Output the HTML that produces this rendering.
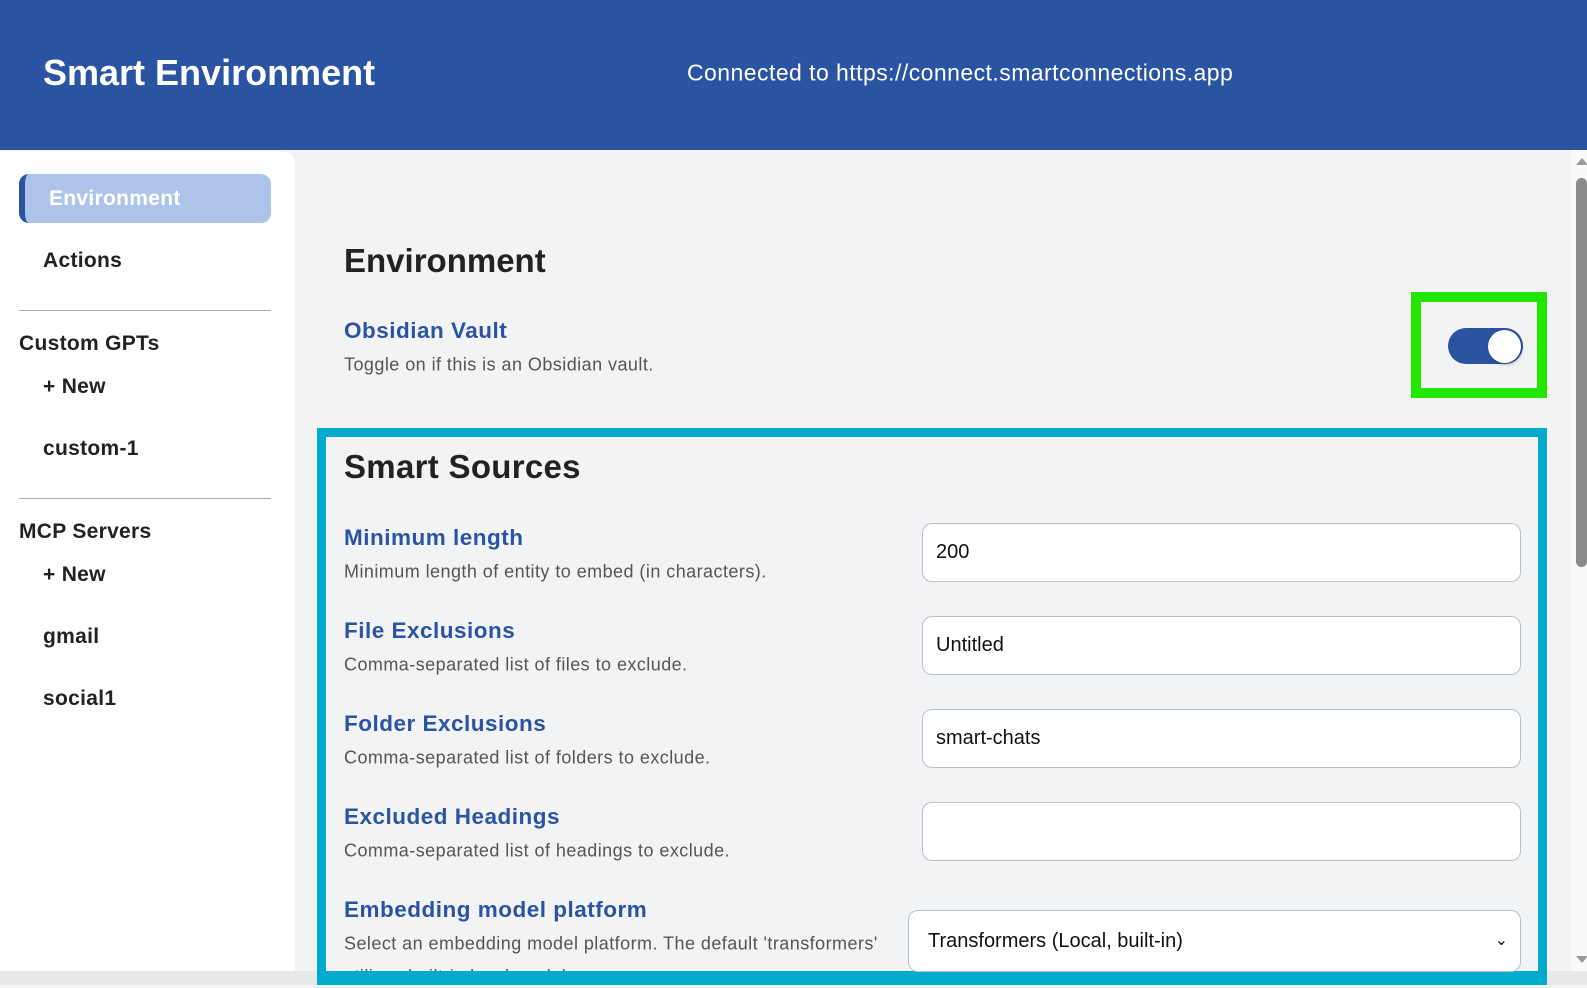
<!DOCTYPE html>
<html><head><meta charset="utf-8"><style>
*{box-sizing:border-box;margin:0;padding:0}
body{width:1587px;height:985px;overflow:hidden;background:#f2f3f5;font-family:"Liberation Sans",Arial,sans-serif;position:relative}
.a{position:absolute;white-space:nowrap}
.hdr{left:0;top:0;width:1587px;height:150px;background:#2a53a2}
.side{left:0;top:151px;width:295px;height:820px;background:#fff;border-top-right-radius:12px}
.nav{font-size:21px;font-weight:bold;color:#222;transform:translateY(-50%);letter-spacing:0.3px}
.hr{height:1px;background:#aaa;left:19px;width:252px}
.lab{font-size:22.5px;font-weight:bold;color:#2a53a2;transform:translateY(-50%);left:344px;letter-spacing:0.5px}
.desc{font-size:18px;color:#555;transform:translateY(-50%);left:344px;letter-spacing:0.45px}
.inp{left:922px;width:599px;height:59px;background:#fff;border:1px solid #b8bfcc;border-radius:10px;font-size:20px;color:#111;padding-left:13px;line-height:57px}
</style></head><body>
<div class="a hdr"></div>
<div class="a" style="left:43px;top:73px;transform:translateY(-50%);font-size:36px;font-weight:bold;color:#fff">Smart Environment</div>
<div class="a" style="left:687px;top:73px;transform:translateY(-50%);font-size:23px;color:#fff;letter-spacing:0.45px">Connected to https://connect.smartconnections.app</div>
<div class="a side"></div>
<div class="a" style="left:19px;top:174px;width:252px;height:49px;background:#aec3ea;border-radius:10px;border-left:6px solid #2a53a2"></div>
<div class="a nav" style="left:49px;top:199px;color:#fff">Environment</div>
<div class="a nav" style="left:43px;top:261px">Actions</div>
<div class="a hr" style="top:310px"></div>
<div class="a nav" style="left:19px;top:344px">Custom GPTs</div>
<div class="a nav" style="left:43px;top:387px">+ New</div>
<div class="a nav" style="left:43px;top:449px">custom-1</div>
<div class="a hr" style="top:498px"></div>
<div class="a nav" style="left:19px;top:532px">MCP Servers</div>
<div class="a nav" style="left:43px;top:575px">+ New</div>
<div class="a nav" style="left:43px;top:637px">gmail</div>
<div class="a nav" style="left:43px;top:699px">social1</div>
<div class="a" style="left:0;top:971px;width:1587px;height:14px;background:#e8e9eb"></div>
<div class="a" style="left:344px;top:261px;transform:translateY(-50%);font-size:33px;font-weight:bold;color:#222">Environment</div>
<div class="a lab" style="top:331px">Obsidian Vault</div>
<div class="a desc" style="top:365px">Toggle on if this is an Obsidian vault.</div>
<div class="a" style="left:1411px;top:292px;width:136px;height:106px;border:10px solid #22e600"></div>
<div class="a" style="left:1448px;top:328px;width:75px;height:36px;background:#2a53a2;border-radius:18px"></div>
<div class="a" style="left:1488px;top:330px;width:33px;height:33px;background:#fff;border-radius:50%;box-shadow:1px 2px 3px rgba(0,0,0,.25)"></div>
<div class="a" style="left:317px;top:428px;width:1230px;height:556px;border:9px solid #00aacc;border-bottom-width:11px"></div>
<div class="a" style="left:344px;top:467px;transform:translateY(-50%);font-size:33px;font-weight:bold;color:#222;letter-spacing:0.3px">Smart Sources</div>
<div class="a lab" style="top:538px">Minimum length</div>
<div class="a desc" style="top:572px">Minimum length of entity to embed (in characters).</div>
<div class="a inp" style="top:523px">200</div>
<div class="a lab" style="top:631px">File Exclusions</div>
<div class="a desc" style="top:665px">Comma-separated list of files to exclude.</div>
<div class="a inp" style="top:616px">Untitled</div>
<div class="a lab" style="top:724px">Folder Exclusions</div>
<div class="a desc" style="top:758px">Comma-separated list of folders to exclude.</div>
<div class="a inp" style="top:709px">smart-chats</div>
<div class="a lab" style="top:817px">Excluded Headings</div>
<div class="a desc" style="top:851px">Comma-separated list of headings to exclude.</div>
<div class="a inp" style="top:802px"></div>
<div class="a lab" style="top:910px">Embedding model platform</div>
<div class="a desc" style="top:944px">Select an embedding model platform. The default 'transformers'</div>
<div class="a desc" style="top:977px">utilizes built-in local models.</div>
<div class="a" style="left:317px;top:971px;width:1230px;height:14px;background:#00aacc"></div>
<div class="a inp" style="left:908px;width:613px;top:910px;height:62px;line-height:60px;padding-left:19px">Transformers (Local, built-in)<span style="position:absolute;right:12px;top:0;font-size:16px">&#8964;</span></div>
<div class="a" style="left:1571px;top:150px;width:16px;height:821px;background:#fafafa"></div>
<div class="a" style="left:1576px;top:178px;width:11px;height:389px;background:#8a8a8a;border-radius:6px"></div>
<div class="a" style="left:1576px;top:158px;width:0;height:0;border-left:6px solid transparent;border-right:6px solid transparent;border-bottom:7px solid #999"></div>
<div class="a" style="left:1576px;top:956px;width:0;height:0;border-left:6px solid transparent;border-right:6px solid transparent;border-top:7px solid #999"></div>
</body></html>
